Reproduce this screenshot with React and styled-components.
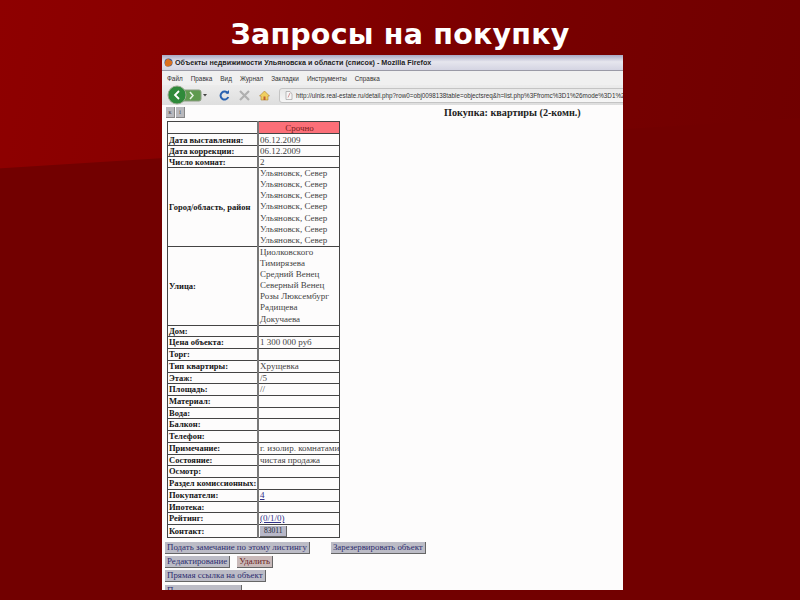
import React from 'react';
import styled, { createGlobalStyle } from 'styled-components';

const Global = createGlobalStyle`
  html, body { margin: 0; padding: 0; }
  body { width: 800px; height: 600px; overflow: hidden; background: #700000; }
`;

const Slide = styled.div`
  width: 800px; height: 600px; position: relative; overflow: hidden;
  display: flex; flex-direction: column; align-items: center;
  background:
    linear-gradient(176.4deg, transparent 167.5px, rgba(114,0,0,1) 168.5px),
    linear-gradient(100deg, #8e0000 0%, #860000 28%, #780000 60%, #6e0000 100%);
`;

const Title = styled.h1`
  margin: 14px 0 0; height: 41px; flex: none;
  font: bold 28.5px/41px "DejaVu Sans", "Open Sans", sans-serif; color: #fff;
  letter-spacing: 0.2px; white-space: nowrap;
`;

const Browser = styled.div`
  width: 461px; height: 535px; margin-left: -15px; background: #fdfcfc;
  display: flex; flex-direction: column; overflow: hidden; flex: none;
`;

const TitleBar = styled.div`
  height: 15px; flex: none; display: flex; align-items: center; gap: 2px; padding-left: 2px;
  background: linear-gradient(#a9a9c4 0%, #e6e6ee 45%, #d4d4e2 100%);
  border-bottom: 1px solid #9a9aa6;
  font: bold 7.2px "Liberation Sans", sans-serif; color: #222; white-space: nowrap;
`;

const MenuBar = styled.div`
  height: 14px; flex: none; display: flex; align-items: center; gap: 8px; padding-left: 5px;
  background: #f0f0f0; font: 6.4px "Liberation Sans", sans-serif; color: #333; white-space: nowrap;
`;

const NavBar = styled.div`
  height: 20px; flex: none; display: flex; align-items: center; padding-left: 4px; gap: 9px;
  background: linear-gradient(#ececec, #dedede); overflow: hidden; white-space: nowrap;
`;

const AddressBox = styled.div`
  flex: 1; height: 13px; margin-right: -60px; display: flex; align-items: center; gap: 3px;
  background: linear-gradient(#e8e8e8, #f6f6f6); border: 1px solid #c4c4c4; border-radius: 3px 0 0 3px; padding-left: 5px;
  font: 6.3px "Liberation Sans", sans-serif; color: #333; overflow: hidden;
`;

const Content = styled.div`
  flex: 1; position: relative; padding: 2px 0 0 5px; display: flex; flex-direction: column; overflow: hidden;
`;

const TopRow = styled.div`
  height: 14px; flex: none; display: flex; align-items: flex-start; gap: 1px; margin-left: -1px;
`;

const TinyBtn = styled.div`
  width: 8px; height: 10px; background: #b9b9bd; border-right: 1px solid #888; border-bottom: 1px solid #888;
  font: 6px/10px "Liberation Serif", serif; color: #444; text-align: center;
`;

const Heading = styled.div`
  position: absolute; left: 282px; top: 2px; width: 160px;
  font: bold 10.2px/12px "Liberation Serif", serif; color: #222; white-space: nowrap;
`;

const Table = styled.table`
  border-collapse: collapse; table-layout: fixed; width: 173px; flex: none;
  font: 9px "Liberation Serif", serif; color: #444;
  td { border: 1px solid #444; padding: 0 0 0 1px; white-space: nowrap; overflow: hidden; vertical-align: middle; }
  td:first-child { width: 88px; font-size: 8.5px; font-weight: bold; color: #151515; border-right: 2px solid #777; }
`;

const Row = styled.tr`
  height: ${p => p.$h}px;
`;

const UrgentCell = styled.td`
  background: #fb6f78; color: #7c2020; text-align: center;
`;

const LineStack = styled.div`
  display: flex; flex-direction: column;
  line-height: 11.1px;
`;

const Link = styled.span`
  color: #33338a; text-decoration: underline;
`;

const ContactBtn = styled.span`
  display: inline-block; padding: 0 4px; background: #b8b8c8; border-right: 1px solid #666; border-bottom: 1px solid #666;
  font-size: 7.5px; line-height: 10px; color: #223;
`;

const ActionRow = styled.div`
  display: flex; flex: none; gap: ${p => p.$gap || 7}px; height: 14.3px; align-items: flex-start;
`;

const Actions = styled.div`
  display: flex; flex-direction: column; padding-top: 4px; margin-left: -2px;
`;

const Action = styled.div`
  height: 11px; padding: 0 2px; background: ${p => p.$red ? '#c9b9b9' : '#bcbcc6'};
  border-right: 1px solid #666; border-bottom: 1px solid #666;
  font: 8.9px/11px "Liberation Serif", serif; color: ${p => p.$red ? '#6a2020' : '#2e2e70'}; white-space: nowrap;
  min-width: ${p => p.$min || 0}px;
`;

const Firefox = () => (
  <svg width="9" height="9" viewBox="0 0 10 10">
    <circle cx="5" cy="5" r="4.500" fill="#3b5a96" />
    <path d="M1 6C1 2 4 .5 6 1c-1 1 2 1 3 3 1 3-2 5.500-4.500 5.500S1 8 1 6z" fill="#d9701f" />
  </svg>
);

const NavButtons = () => (
  <svg width="44" height="20" viewBox="0 0 44 20" style={{ flex: 'none' }}>
    <rect x="14" y="5" width="21" height="11" rx="2" fill="#5f9a4e" stroke="#8a9a80" />
    <circle cx="11" cy="10" r="9" fill="#2f8a3a" stroke="#9aaa90" />
    <path d="M13 6 9 10l4 4" fill="none" stroke="#fff" strokeWidth="1.800" />
    <path d="M24 7l3 3.500-3 3.500" fill="none" stroke="#e8f2e2" strokeWidth="1.500" />
    <path d="M37 9h4l-2 2.500z" fill="#444" />
  </svg>
);

const Reload = () => (
  <svg width="11" height="11" viewBox="0 0 11 11" style={{ flex: 'none' }}>
    <path d="M9 3.500A4 4 0 1 0 9.300 7" fill="none" stroke="#2a62b0" strokeWidth="2" />
    <path d="M6.500 3.500H10V0z" fill="#2a62b0" />
  </svg>
);

const Stop = () => (
  <svg width="11" height="11" viewBox="0 0 11 11" style={{ flex: 'none' }}>
    <path d="M1 1l9 9M10 1l-9 9" stroke="#b0b0b0" strokeWidth="2.200" />
  </svg>
);

const Home = () => (
  <svg width="11" height="11" viewBox="0 0 11 11" style={{ flex: 'none' }}>
    <path d="M5.500 1 .5 6H2v4h7V6h1.500z" fill="#f0d060" stroke="#b08030" strokeWidth=".6" />
    <rect x="4.500" y="6.500" width="2" height="3.500" fill="#c06030" />
  </svg>
);

const Page = () => (
  <svg width="8" height="9" viewBox="0 0 8 9" style={{ flex: 'none' }}>
    <path d="M1 .5h4L7 3v5.500H1z" fill="#f6f6f6" stroke="#a0a0a0" strokeWidth=".7" />
    <path d="M3 6.500 5 2" stroke="#c98080" strokeWidth=".8" />
  </svg>
);

const city = Array(7).fill('Ульяновск, Север');
const streets = ['Циолковского', 'Тимирязева', 'Средний Венец', 'Северный Венец', 'Розы Люксембург', 'Радищева', 'Докучаева'];

const rows = [
  ['Дата выставления:', '06.12.2009', 12], ['Дата коррекции:', '06.12.2009', 11], ['Число комнат:', '2', 11],
];
const rows2 = [
  ['Дом:', '', 11], ['Цена объекта:', '1 300 000 руб', 12], ['Торг:', '', 12], ['Тип квартиры:', 'Хрущевка', 12],
  ['Этаж:', '/5', 11], ['Площадь:', '//', 12], ['Материал:', '', 12], ['Вода:', '', 11], ['Балкон:', '', 12],
  ['Телефон:', '', 12], ['Примечание:', 'г. изолир. комнатами', 12], ['Состояние:', 'чистая продажа', 11],
  ['Осмотр:', '', 12], ['Раздел комиссионных:', '', 12],
];

export default function App() {
  return (
    <Slide>
      <Global />
      <Title>Запросы на покупку</Title>
      <Browser>
        <TitleBar><Firefox />Объекты недвижимости Ульяновска и области (список) - Mozilla Firefox</TitleBar>
        <MenuBar>
          <span>Файл</span><span>Правка</span><span>Вид</span><span>Журнал</span><span>Закладки</span><span>Инструменты</span><span>Справка</span>
        </MenuBar>
        <NavBar>
          <NavButtons /><Reload /><Stop /><Home />
          <AddressBox><Page />http://ulnls.real-estate.ru/detail.php?row0=obj0098138table=objectsreq&amp;h=list.php%3Ffromc%3D1%26mode%3D1%26</AddressBox>
        </NavBar>
        <Content>
          <TopRow><TinyBtn>к</TinyBtn><TinyBtn>i</TinyBtn></TopRow>
          <Heading>Покупка: квартиры (2-комн.)</Heading>
          <Table>
            <tbody>
              <Row $h={12}><td /><UrgentCell>Срочно</UrgentCell></Row>
              {rows.map(r => <Row key={r[0]} $h={r[2]}><td>{r[0]}</td><td>{r[1]}</td></Row>)}
              <Row $h={79}><td>Город/область, район</td><td><LineStack>{city.map((c, i) => <span key={i}>{c}</span>)}</LineStack></td></Row>
              <Row $h={78}><td>Улица:</td><td><LineStack>{streets.map(s => <span key={s}>{s}</span>)}</LineStack></td></Row>
              {rows2.map(r => <Row key={r[0]} $h={r[2]}><td>{r[0]}</td><td>{r[1]}</td></Row>)}
              <Row $h={12}><td>Покупатели:</td><td><Link>4</Link></td></Row>
              <Row $h={11}><td>Ипотека:</td><td /></Row>
              <Row $h={12}><td>Рейтинг:</td><td><Link>(0/1/0)</Link></td></Row>
              <Row $h={12}><td>Контакт:</td><td><ContactBtn>83011</ContactBtn></td></Row>
            </tbody>
          </Table>
          <Actions>
            <ActionRow $gap={21}><Action>Подать замечание по этому листингу</Action><Action>Зарезервировать объект</Action></ActionRow>
            <ActionRow><Action>Редактирование</Action><Action $red>Удалить</Action></ActionRow>
            <ActionRow><Action>Прямая ссылка на объект</Action></ActionRow>
            <ActionRow><Action $min={72}>П</Action></ActionRow>
          </Actions>
        </Content>
      </Browser>
    </Slide>
  );
}
